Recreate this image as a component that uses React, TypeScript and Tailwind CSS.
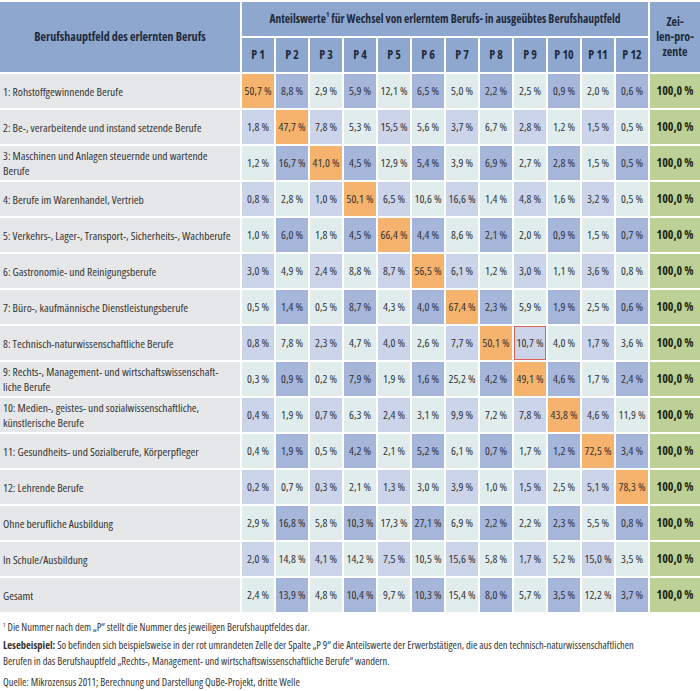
import React from "react";

type Row = {
  label: string;
  values: string[];
};

const rows: Row[] = [
  { label: "1: Rohstoffgewinnende Berufe", values: ["50,7", "8,8", "2,9", "5,9", "12,1", "6,5", "5,0", "2,2", "2,5", "0,9", "2,0", "0,6"] },
  { label: "2: Be-, verarbeitende und instand setzende Berufe", values: ["1,8", "47,7", "7,8", "5,3", "15,5", "5,6", "3,7", "6,7", "2,8", "1,2", "1,5", "0,5"] },
  { label: "3: Maschinen und Anlagen steuernde und wartende Berufe", values: ["1,2", "16,7", "41,0", "4,5", "12,9", "5,4", "3,9", "6,9", "2,7", "2,8", "1,5", "0,5"] },
  { label: "4: Berufe im Warenhandel, Vertrieb", values: ["0,8", "2,8", "1,0", "50,1", "6,5", "10,6", "16,6", "1,4", "4,8", "1,6", "3,2", "0,5"] },
  { label: "5: Verkehrs-, Lager-, Transport-, Sicherheits-, Wachberufe", values: ["1,0", "6,0", "1,8", "4,5", "66,4", "4,4", "8,6", "2,1", "2,0", "0,9", "1,5", "0,7"] },
  { label: "6: Gastronomie- und Reinigungsberufe", values: ["3,0", "4,9", "2,4", "8,8", "8,7", "56,5", "6,1", "1,2", "3,0", "1,1", "3,6", "0,8"] },
  { label: "7: Büro-, kaufmännische Dienstleistungsberufe", values: ["0,5", "1,4", "0,5", "8,7", "4,3", "4,0", "67,4", "2,3", "5,9", "1,9", "2,5", "0,6"] },
  { label: "8: Technisch-naturwissenschaftliche Berufe", values: ["0,8", "7,8", "2,3", "4,7", "4,0", "2,6", "7,7", "50,1", "10,7", "4,0", "1,7", "3,6"] },
  { label: "9: Rechts-, Management- und wirtschaftswissenschaft-\u200Bliche Berufe", values: ["0,3", "0,9", "0,2", "7,9", "1,9", "1,6", "25,2", "4,2", "49,1", "4,6", "1,7", "2,4"] },
  { label: "10: Medien-, geistes- und sozialwissenschaftliche, künstlerische Berufe", values: ["0,4", "1,9", "0,7", "6,3", "2,4", "3,1", "9,9", "7,2", "7,8", "43,8", "4,6", "11,9"] },
  { label: "11: Gesundheits- und Sozialberufe, Körperpfleger", values: ["0,4", "1,9", "0,5", "4,2", "2,1", "5,2", "6,1", "0,7", "1,7", "1,2", "72,5", "3,4"] },
  { label: "12: Lehrende Berufe", values: ["0,2", "0,7", "0,3", "2,1", "1,3", "3,0", "3,9", "1,0", "1,5", "2,5", "5,1", "78,3"] },
  { label: "Ohne berufliche Ausbildung", values: ["2,9", "16,8", "5,8", "10,3", "17,3", "27,1", "6,9", "2,2", "2,2", "2,3", "5,5", "0,8"] },
  { label: "In Schule/Ausbildung", values: ["2,0", "14,8", "4,1", "14,2", "7,5", "10,5", "15,6", "5,8", "1,7", "5,2", "15,0", "3,5"] },
  { label: "Gesamt", values: ["2,4", "13,9", "4,8", "10,4", "9,7", "10,3", "15,4", "8,0", "5,7", "3,5", "12,2", "3,7"] },
];

const cellColor = (row: number, col: number) => {
  // row and col are 1-based; diagonal of the 12 occupational fields is orange
  if (row <= 12 && row === col) return "bg-[#f5b36e]";
  if (row % 2 === 1) return col % 2 === 0 ? "bg-[#a5b6da]" : "bg-[#e1eded]";
  return col % 2 === 1 ? "bg-[#ccd4ea]" : "bg-[#e1eded]";
};

export default function App() {
  return (
    <div className="w-[700px] h-[691px] bg-white text-[#333] overflow-hidden font-['Open_Sans',sans-serif] font-stretch-[75%]">
      {/* Table */}
      <div className="mt-[2px] grid grid-cols-[240px_repeat(12,32px)_50px] auto-rows-[34px] gap-[2px] bg-white">
        <div className="row-span-2 bg-[#8da7cf] flex items-center justify-center text-[12px] font-bold text-[#1f2a3a]">
          Berufshauptfeld des erlernten Berufs
        </div>
        <div className="col-span-12 bg-[#8da7cf] flex items-center justify-center text-[11.5px] font-bold text-[#1f2a3a] whitespace-nowrap">
          Anteilswerte<sup className="text-[7px] -top-[4px]">1</sup>&nbsp;für Wechsel von erlerntem Berufs- in ausgeübtes Berufshauptfeld
        </div>
        <div className="row-span-2 bg-[#8da7cf] flex flex-col items-center justify-center text-center text-[12px] font-bold leading-[15px] text-[#1f2a3a] pb-[2px]">
          <span>Zei-</span>
          <span>len-pro-</span>
          <span>zente</span>
        </div>
        {Array.from({ length: 12 }, (_, i) => (
          <div
            key={i}
            className="bg-[#8da7cf] flex items-center justify-center text-[12px] font-bold text-[#1f2a3a] whitespace-nowrap"
          >
            P {i + 1}
          </div>
        ))}

        {rows.map((row, r) => (
          <React.Fragment key={r}>
            <div className="bg-[#e6e7e9] flex items-center pl-[3px] pr-[4px] text-[11.5px] leading-[15px]">
              {row.label}
            </div>
            {row.values.map((v, c) => (
              <div
                key={c}
                className={`${cellColor(r + 1, c + 1)} flex items-center justify-center text-[11.5px] whitespace-nowrap ${
                  r === 7 && c === 8 ? "border border-[#e2605a]" : ""
                }`}
              >
                {v} %
              </div>
            ))}
            <div className="bg-[#bdd197] flex items-center justify-center text-[12px] font-bold text-[#1e2410] whitespace-nowrap">
              100,0 %
            </div>
          </React.Fragment>
        ))}
      </div>

      {/* Notes */}
      <div className="mt-[7px] pl-[3px] text-[10.5px] leading-[16px] text-[#333] whitespace-nowrap">
        <p>
          <sup className="text-[6px] -top-[4px]">1</sup> Die Nummer nach dem „P“ stellt die Nummer des jeweiligen Berufshauptfeldes dar.
        </p>
        <p className="mt-[2px]">
          <span className="font-bold">Lesebeispiel:</span> So befinden sich beispielsweise in der rot umrandeten Zelle der Spalte „P 9“ die Anteilswerte der Erwerbstätigen, die aus den technisch-naturwissenschaftlichen
          <br />
          Berufen in das Berufshauptfeld „Rechts-, Management- und wirtschaftswissenschaftliche Berufe“ wandern.
        </p>
        <p className="mt-[5px]">Quelle: Mikrozensus 2011; Berechnung und Darstellung QuBe-Projekt, dritte Welle</p>
      </div>
    </div>
  );
}
